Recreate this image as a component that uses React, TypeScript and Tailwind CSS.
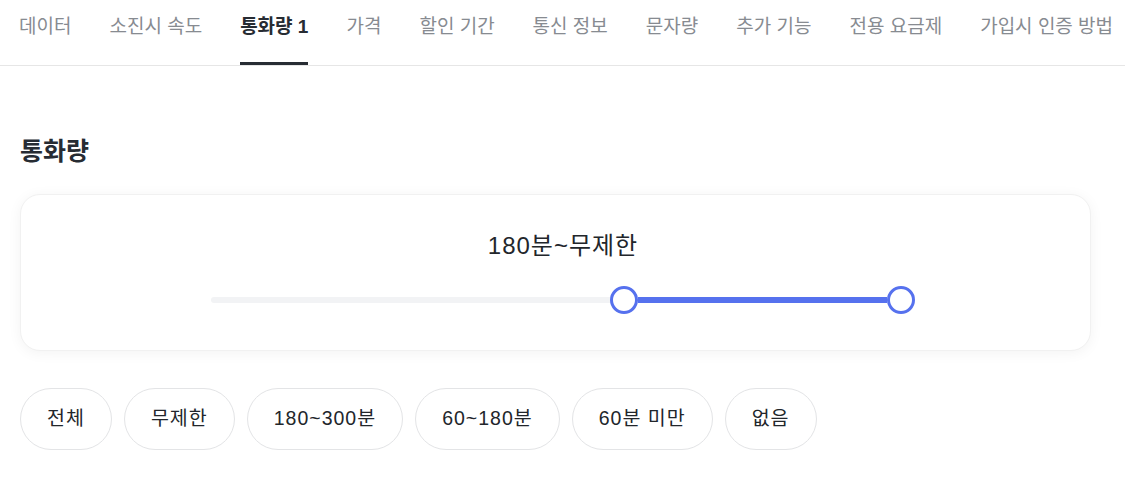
import { useState } from "react";

const TABS = [
  "데이터",
  "소진시 속도",
  "통화량 1",
  "가격",
  "할인 기간",
  "통신 정보",
  "문자량",
  "추가 기능",
  "전용 요금제",
  "가입시 인증 방법",
];

const CHIPS = ["전체", "무제한", "180~300분", "60~180분", "60분 미만", "없음"];

export default function App() {
  const [active] = useState(2);

  return (
    <div
      className="min-h-screen w-[1125px] bg-white text-[#22262b]"
      style={{ fontFamily: '"Liberation Sans", "Noto Sans CJK KR", sans-serif' }}
    >
      {/* Tabs */}
      <nav className="flex h-[66px] gap-[38px] overflow-hidden whitespace-nowrap border-b border-[#e6e6e6] pl-[19px]">
        {TABS.map((t, i) => (
          <div
            key={t}
            className={
              i === active
                ? "flex h-full flex-col text-[19px] font-bold text-[#272c33]"
                : "flex h-full flex-col text-[19px] text-[#878b91]"
            }
          >
            <span className="flex flex-1 items-center pb-[7px]">{t}</span>
            <span className={i === active ? "h-[3px] w-full bg-[#272c33]" : "h-[3px]"} />
          </div>
        ))}
      </nav>

      <section className="flex flex-col px-[20px]">
        <h2 className="mt-[67px] text-[25px] font-bold leading-[36px] text-[#272c33]">
          통화량
        </h2>

        {/* Range card */}
        <div className="mt-[25px] flex h-[157px] w-[1071px] flex-col items-start rounded-[20px] border border-[#f1f1f1] bg-white pl-[190px] shadow-[0_2px_14px_rgba(0,0,0,0.05)]">
          <div className="flex w-[704px] flex-col">
            <p className="mt-[34px] text-center text-[24px] leading-[34px] tracking-[1px] text-[#22262b]">
              180분~무제한
            </p>
            {/* slider */}
            <div className="mt-[22px] flex h-[30px] items-center">
              <div className="h-[6px] w-[399px] rounded-l-full bg-[#f2f3f5]" />
              <div className="h-[28px] w-[28px] shrink-0 rounded-full border-[3px] border-[#5671ee] bg-white" />
              <div className="h-[6px] w-[249px] bg-[#5671ee]" />
              <div className="h-[28px] w-[28px] shrink-0 rounded-full border-[3px] border-[#5671ee] bg-white" />
            </div>
          </div>
        </div>

        {/* Chips */}
        <div className="mt-[37px] flex gap-[12px]">
          {CHIPS.map((c) => (
            <button
              key={c}
              className="flex h-[62px] items-center rounded-full border border-[#e3e4e6] bg-white px-[26px] text-[19.5px] tracking-[1px] text-[#22262b]"
            >
              {c}
            </button>
          ))}
        </div>
      </section>
    </div>
  );
}
